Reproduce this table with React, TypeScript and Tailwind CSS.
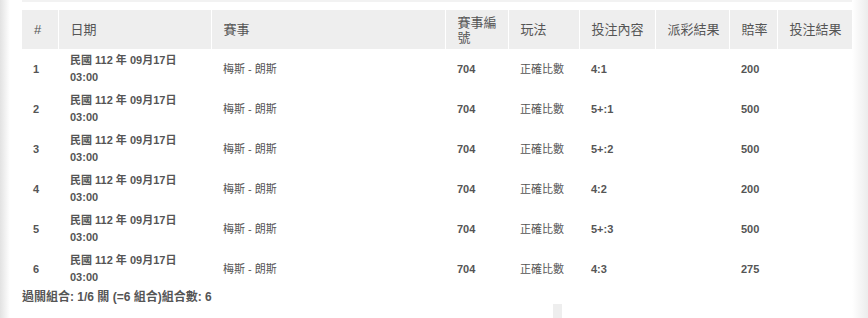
const rows = [
  { no: 1, bet: "4:1", odds: "200" },
  { no: 2, bet: "5+:1", odds: "500" },
  { no: 3, bet: "5+:2", odds: "500" },
  { no: 4, bet: "4:2", odds: "200" },
  { no: 5, bet: "5+:3", odds: "500" },
  { no: 6, bet: "4:3", odds: "275" },
];

const headers = [
  { label: "#", w: "w-[36px]" },
  { label: "日期", w: "w-[153px]" },
  { label: "賽事", w: "w-[234px]" },
  { label: "賽事編號", w: "w-[63px]" },
  { label: "玩法", w: "w-[71px]" },
  { label: "投注內容", w: "w-[76px]" },
  { label: "派彩結果", w: "w-[74px]" },
  { label: "賠率", w: "w-[48px]" },
  { label: "投注結果", w: "w-[75px]" },
];

export default function App() {
  return (
    <div
      className="relative w-[868px] h-[318px] overflow-hidden bg-white text-[#555]"
      style={{ fontFamily: '"Liberation Sans", Arial, "Noto Sans CJK TC", sans-serif' }}
    >
      <div className="absolute left-0 top-0 h-full w-[10px] bg-gradient-to-r from-[#e2e2e2] to-white" />
      <div className="absolute right-0 top-0 h-full w-[16px] bg-gradient-to-r from-white to-[#ececec]" />

      <div className="pl-[22px] pr-[16px]">
        <div className="h-[2px] bg-[#f2f2f2]" />
        <div className="pt-[8px]">
          <table className="table-fixed border-collapse w-[830px]">
            <thead>
              <tr className="bg-[#eeeeee] h-[39px]">
                {headers.map((h, i) => (
                  <th
                    key={i}
                    className={`${h.w} ${i > 0 ? "border-l border-white" : ""} text-left font-normal text-[13px] leading-[15px] pl-[12px] pr-[4px] align-middle`}
                  >
                    {h.label}
                  </th>
                ))}
              </tr>
            </thead>
            <tbody>
              {rows.map((r) => (
                <tr key={r.no} className="h-[40px] text-[11px]">
                  <td className="pl-[11px] font-bold">{r.no}</td>
                  <td className="pl-[12px] font-bold leading-[17px]">
                    民國 112 年 09月17日
                    <br />
                    03:00
                  </td>
                  <td className="pl-[12px]">梅斯 - 朗斯</td>
                  <td className="pl-[12px] font-bold">704</td>
                  <td className="pl-[12px]">正確比數</td>
                  <td className="pl-[12px] font-bold">{r.bet}</td>
                  <td className="pl-[12px]"></td>
                  <td className="pl-[12px] font-bold">{r.odds}</td>
                  <td className="pl-[12px]"></td>
                </tr>
              ))}
            </tbody>
          </table>
          <div className="pt-[1px] text-[12px] font-bold leading-[14px]">
            過關組合: 1/6 關 (=6 組合)組合數: 6
          </div>
        </div>
      </div>
      <div className="absolute left-[553px] top-[304px] h-[14px] w-[9px] bg-[#eeeeee]" />
    </div>
  );
}
